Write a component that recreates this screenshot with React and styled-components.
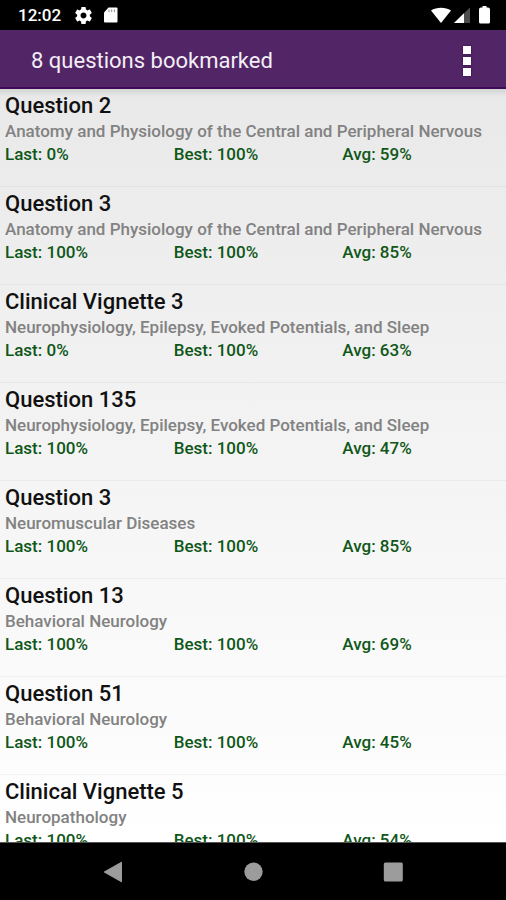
import React from "react";
import styled, { createGlobalStyle } from "styled-components";

const questions = [
	{ title: "Question 2", topic: "Anatomy and Physiology of the Central and Peripheral Nervous", last: 0, best: 100, avg: 59 },
	{ title: "Question 3", topic: "Anatomy and Physiology of the Central and Peripheral Nervous", last: 100, best: 100, avg: 85 },
	{ title: "Clinical Vignette 3", topic: "Neurophysiology, Epilepsy, Evoked Potentials, and Sleep", last: 0, best: 100, avg: 63 },
	{ title: "Question 135", topic: "Neurophysiology, Epilepsy, Evoked Potentials, and Sleep", last: 100, best: 100, avg: 47 },
	{ title: "Question 3", topic: "Neuromuscular Diseases", last: 100, best: 100, avg: 85 },
	{ title: "Question 13", topic: "Behavioral Neurology", last: 100, best: 100, avg: 69 },
	{ title: "Question 51", topic: "Behavioral Neurology", last: 100, best: 100, avg: 45 },
	{ title: "Clinical Vignette 5", topic: "Neuropathology", last: 100, best: 100, avg: 54 },
];

const App = () => {
	return (
		<Screen>
			<GlobalStyle />
			<StatusBar>
				<Clock>12:02</Clock>
				<StatusIcons $gap="11px">
					<GearIcon />
					<CardIcon />
				</StatusIcons>
				<Spacer />
				<StatusIcons $gap="2px">
					<WifiIcon />
					<SignalIcon />
					<BatteryIcon />
				</StatusIcons>
			</StatusBar>

			<AppBar>
				<Heading>{questions.length} questions bookmarked</Heading>
				<MenuButton type="button" aria-label="More options">
					<Dot />
					<Dot />
					<Dot />
				</MenuButton>
			</AppBar>

			<List>
				{questions.map((q, i) => (
					<Row key={i}>
						<Title>{q.title}</Title>
						<Topic>{q.topic}</Topic>
						<Stats>
							<span>Last: {q.last}%</span>
							<span>Best: {q.best}%</span>
							<span>Avg: {q.avg}%</span>
						</Stats>
					</Row>
				))}
			</List>

			<NavBar>
				<NavButton type="button" aria-label="Back">
					<svg width="20" height="22" viewBox="0 0 20 22">
						<path d="M18.500 1.200V20.800L1.200 11z" fill="#9c9c9c" stroke="#9c9c9c" strokeLinejoin="round" />
					</svg>
				</NavButton>
				<NavButton type="button" aria-label="Home">
					<svg width="20" height="20" viewBox="0 0 20 20">
						<circle cx="10.500" cy="9.700" r="9.200" fill="#9c9c9c" />
					</svg>
				</NavButton>
				<NavButton type="button" aria-label="Recent apps">
					<svg width="20" height="20" viewBox="0 0 20 20">
						<rect x="0.800" y="0.500" width="19" height="19" rx="1.500" fill="#9c9c9c" />
					</svg>
				</NavButton>
			</NavBar>
		</Screen>
	);
};

const GearIcon = () => (
	<svg width="17" height="17" viewBox="2 2 20 20" fill="#fff">
		<path d="M19.430 12.980c.04-.32.07-.64.07-.98s-.03-.66-.07-.98l2.110-1.650c.19-.15.24-.42.12-.64l-2-3.460c-.12-.22-.39-.3-.61-.22l-2.490 1c-.52-.4-1.080-.73-1.690-.98l-.38-2.650C14.460 2.180 14.250 2 14 2h-4c-.25 0-.46.18-.49.42l-.38 2.650c-.61.25-1.170.59-1.690.98l-2.490-1c-.23-.09-.49 0-.61.22l-2 3.460c-.13.22-.07.49.12.64l2.110 1.650c-.04.32-.07.65-.07.98s.03.66.07.98l-2.110 1.650c-.19.15-.24.42-.12.64l2 3.460c.12.22.39.3.61.22l2.490-1c.52.4 1.080.73 1.690.98l.38 2.650c.03.24.24.42.49.42h4c.25 0 .46-.18.49-.42l.38-2.650c.61-.25 1.170-.59 1.690-.98l2.490 1c.23.09.49 0 .61-.22l2-3.460c.12-.22.07-.49-.12-.64l-2.110-1.650zM12 15.500c-1.930 0-3.500-1.570-3.500-3.500s1.570-3.500 3.500-3.500 3.500 1.570 3.500 3.500-1.570 3.500-3.500 3.500z" />
	</svg>
);

const CardIcon = () => (
	<svg width="16" height="18" viewBox="0 0 16 18">
		<path d="M5.500 1.500H13.500a1 1 0 0 1 1 1V15.500a1 1 0 0 1-1 1H2a1 1 0 0 1-1-1V6.500z" fill="#fff" />
		<path d="M6 3.500v2.500M8.700 3.500v2.500M11.400 3.500v2.500" stroke="#000" strokeWidth="1" opacity="0.45" />
	</svg>
);

const WifiIcon = () => (
	<svg width="20" height="18" viewBox="0 0 20 18">
		<path d="M0 4.500C5.500 0.700 14.500 0.700 20 4.500L10 17z" fill="#fff" />
	</svg>
);

const SignalIcon = () => (
	<svg width="18" height="18" viewBox="0 0 18 18">
		<path d="M17 1.500V17H1z" fill="#4d4d4d" />
		<path d="M11 7.300V17H1z" fill="#fff" />
	</svg>
);

const BatteryIcon = () => (
	<svg width="18" height="18" viewBox="0 0 18 18">
		<path d="M9.500 0h4v1.500H15a2 2 0 0 1 2 2V16a1.500 1.500 0 0 1-1.500 1.500h-8A1.500 1.500 0 0 1 6 16V3.500a2 2 0 0 1 2-2h1.500z" fill="#fff" />
	</svg>
);

const GlobalStyle = createGlobalStyle`
	* {
		box-sizing: border-box;
	}

	body {
		margin: 0;
		font-family: Roboto, "Liberation Sans", sans-serif;
	}
`;

const Screen = styled.div`
	display: flex;
	flex-direction: column;
	height: 100vh;
	overflow: hidden;
	background: #000;
`;

const StatusBar = styled.div`
	display: flex;
	flex: none;
	align-items: center;
	height: 30px;
	padding: 0 15px 0 18px;
	color: #fff;
`;

const Clock = styled.span`
	margin-right: 14px;
	font-size: 17px;
	font-weight: 500;
	line-height: 30px;
`;

const StatusIcons = styled.div`
	display: flex;
	align-items: center;
	gap: ${(props) => props.$gap};
`;

const Spacer = styled.div`
	flex: 1;
`;

const AppBar = styled.header`
	display: flex;
	flex: none;
	align-items: center;
	justify-content: space-between;
	height: 59px;
	padding: 4px 31px 0;
	background: #522566;
	border-bottom: 2px solid #410a58;
`;

const Heading = styled.h1`
	margin: 0;
	color: #f4eef6;
	font-size: 22px;
	font-weight: 400;
	line-height: 28px;
`;

const MenuButton = styled.button`
	display: flex;
	flex-direction: column;
	align-items: center;
	gap: 3px;
	padding: 4px;
	border: none;
	background: none;
`;

const Dot = styled.span`
	width: 8px;
	height: 8px;
	background: #fff;
	box-shadow: 0 0 2px #2d0440;
`;

const List = styled.ul`
	flex: 1;
	min-height: 0;
	margin: 0;
	padding: 0;
	overflow: hidden;
	list-style: none;
	background: linear-gradient(#d2d4d4, rgba(210, 212, 212, 0) 8px), linear-gradient(#e9e9e9, #fff);
`;

const Row = styled.li`
	height: 98px;
	padding: 4px 5px 0;
	border-bottom: 1px solid rgba(0, 0, 0, 0.04);
`;

const Title = styled.h2`
	margin: 0;
	color: #111;
	font-size: 22px;
	font-weight: 500;
	line-height: 26px;
`;

const Topic = styled.p`
	margin: 0;
	overflow: hidden;
	color: #828282;
	font-size: 17px;
	font-weight: 500;
	line-height: 24px;
	white-space: nowrap;
`;

const Stats = styled.div`
	display: grid;
	grid-template-columns: repeat(3, 1fr);
	margin-right: -10px;
	color: #0f5718;
	font-size: 17px;
	font-weight: 500;
	line-height: 22px;
`;

const NavBar = styled.nav`
	display: flex;
	flex: none;
	align-items: center;
	justify-content: center;
	gap: 80px;
	height: 58px;
	border-top: 1px solid #555;
`;

const NavButton = styled.button`
	display: flex;
	align-items: center;
	justify-content: center;
	width: 60px;
	height: 48px;
	padding: 0;
	border: none;
	background: none;
`;

export default App;
